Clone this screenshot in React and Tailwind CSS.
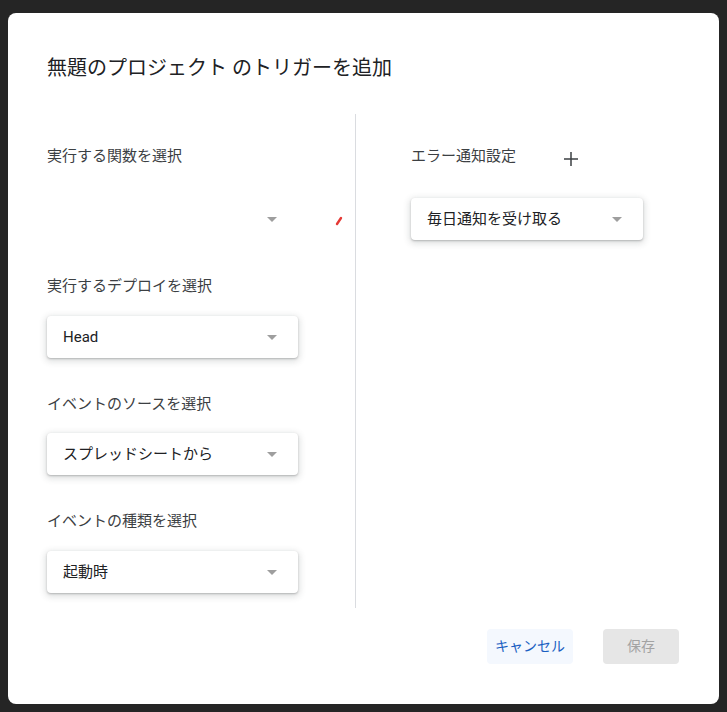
import React from "react";

const font = { fontFamily: 'Roboto, "Noto Sans CJK JP", sans-serif' };

// small grey caret used in every select
const Caret = () => (
  <svg width="10" height="5" viewBox="0 0 10 5" className="shrink-0">
    <path d="M0 0h10L5 5z" fill="#9e9e9e" />
  </svg>
);

const Select = ({ value, width = "w-[251px]", flat = false }) => (
  <div
    className={`${width} h-[42px] rounded-[4px] bg-white flex items-center pl-4 pr-[21px] ${
      flat
        ? ""
        : "shadow-[0_1px_2px_0_rgba(60,64,67,0.3),0_2px_6px_2px_rgba(60,64,67,0.15)]"
    }`}
  >
    <span className="flex-1 text-[15px] leading-[20px] text-[#202124]">{value}</span>
    <Caret />
  </div>
);

const Label = ({ children, className = "" }) => (
  <div className={`text-[15px] leading-[20px] text-[#3c4043] ${className}`}>{children}</div>
);

export default function App() {
  return (
    <div className="min-h-screen bg-[#252525] pt-[13px] pl-[8px]" style={font}>
      <div className="w-[711px] h-[691px] bg-white rounded-[8px] flex flex-col pl-[39px] pr-[40px]">
        <h1 className="pt-[41px] text-[20px] leading-[28px] text-[#202124] font-normal">
          無題のプロジェクト のトリガーを追加
        </h1>

        <div className="mt-[32px] h-[494px] flex">
          {/* left column */}
          <div className="w-[308px] flex flex-col">
            <Label className="mt-[32px]">実行する関数を選択</Label>
            <div className="mt-[32px] flex items-center">
              <Select value="" flat />
              <svg width="8" height="10" viewBox="0 0 8 10" className="ml-[37px] mt-[3px]">
                <path d="M2 8L6 2" stroke="#e53935" strokeWidth="2.4" strokeLinecap="round" />
              </svg>
            </div>

            <Label className="mt-[36px]">実行するデプロイを選択</Label>
            <div className="mt-[20px]">
              <Select value="Head" />
            </div>

            <Label className="mt-[36px]">イベントのソースを選択</Label>
            <div className="mt-[19px]">
              <Select value="スプレッドシートから" />
            </div>

            <Label className="mt-[36px]">イベントの種類を選択</Label>
            <div className="mt-[20px]">
              <Select value="起動時" />
            </div>
          </div>

          <div className="w-px bg-[#dadce0]" />

          {/* right column */}
          <div className="flex-1 pl-[55px] flex flex-col">
            <div className="mt-[32px] flex items-center">
              <Label>エラー通知設定</Label>
              <svg width="14" height="14" viewBox="0 0 14 14" className="ml-[48px] mt-[5px]">
                <path d="M7 0v14M0 7h14" stroke="#3c4043" strokeWidth="1.5" />
              </svg>
            </div>
            <div className="mt-[32px]">
              <Select value="毎日通知を受け取る" width="w-[232px]" />
            </div>
          </div>
        </div>

        <div className="mt-[21px] flex justify-end gap-[30px]">
          <button className="w-[86px] h-[35px] rounded-[4px] bg-[#f4f8fe] text-[14px] text-[#1a5fc2]">
            キャンセル
          </button>
          <button className="w-[76px] h-[35px] rounded-[4px] bg-[#e6e6e6] text-[14px] text-[#a3a3a3]">
            保存
          </button>
        </div>
      </div>
    </div>
  );
}
